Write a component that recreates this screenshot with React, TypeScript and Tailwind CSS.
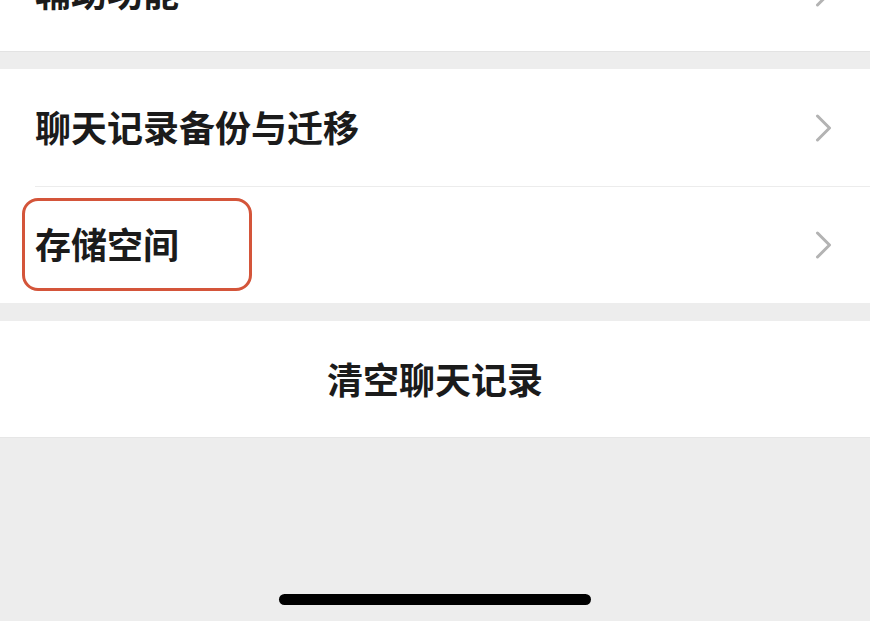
import React from "react";

const font = { fontFamily: '"Noto Sans CJK SC", "Noto Sans", sans-serif' };

function Chevron() {
  return (
    <svg width="18" height="28" viewBox="0 0 18 28" fill="none" className="shrink-0">
      <path d="M2.5 2 L14.5 14 L2.5 26" stroke="#b3b3b3" strokeWidth="3" strokeLinecap="round" strokeLinejoin="round" />
    </svg>
  );
}

function Row({ label, divider = false, highlight = false }: { label: string; divider?: boolean; highlight?: boolean }) {
  return (
    <div className="relative h-[117px] flex items-center pl-[35px] pr-[37px] bg-white">
      {divider && <div className="absolute top-0 left-[35px] right-0 h-px bg-[#ececec]" />}
      <span className="flex-1 text-[36px] leading-none font-semibold text-[#1b1b1b] pb-[3px]">{label}</span>
      <Chevron />
      {highlight && (
        <div className="absolute left-[22px] top-[12px] w-[230px] h-[93px] rounded-[16px] border-[3.5px] border-[#d4553a]" />
      )}
    </div>
  );
}

export default function App() {
  return (
    <div className="w-[870px] h-[621px] overflow-hidden bg-[#ededed] flex flex-col" style={font}>
      <div className="mt-[-66px]">
        <Row label="辅助功能" />
      </div>
      <div className="h-[18px] border-t border-[#e3e3e3] bg-[#ededed]" />
      <div className="bg-white">
        <Row label="聊天记录备份与迁移" />
        <Row label="存储空间" divider highlight />
      </div>
      <div className="h-[18px] bg-[#ededed]" />
      <div className="h-[116px] bg-white flex items-center justify-center">
        <span className="text-[36px] leading-none font-semibold text-[#1b1b1b] pb-[3px]">清空聊天记录</span>
      </div>
      <div className="flex-1 border-t border-[#e6e6e6] flex flex-col justify-end items-center pb-[16px]">
        <div className="w-[312px] h-[11px] rounded-full bg-black" />
      </div>
    </div>
  );
}
